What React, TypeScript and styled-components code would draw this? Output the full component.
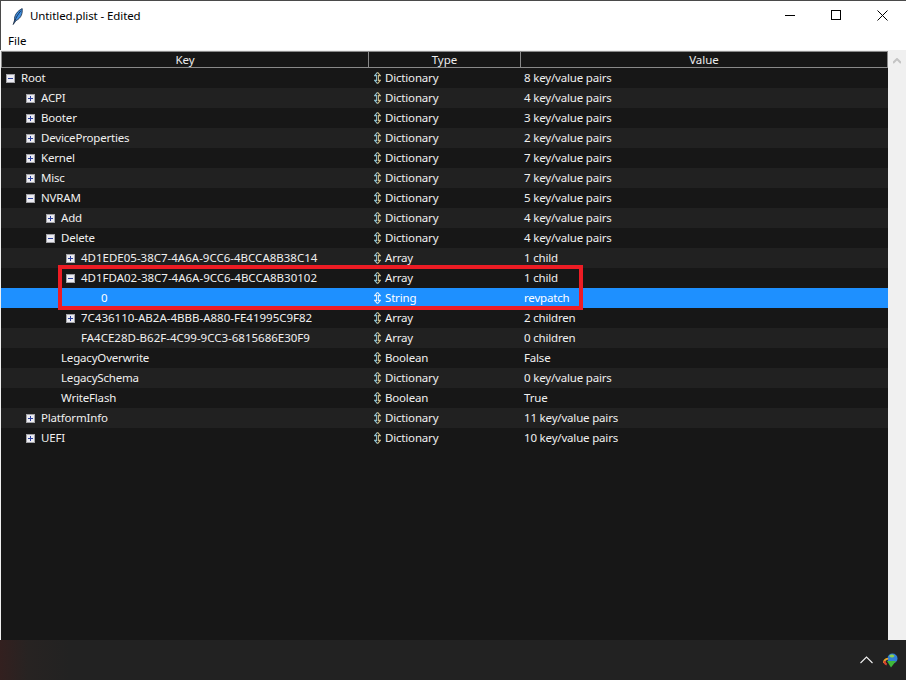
import React from "react";
import styled, { createGlobalStyle } from "styled-components";

const Global = createGlobalStyle`
  html, body { margin: 0; padding: 0; background: #222; }
  #root { width: 906px; height: 680px; }
  * { box-sizing: border-box; }
`;

const Screen = styled.div`
  position: relative;
  width: 906px;
  height: 680px;
  display: flex;
  flex-direction: column;
  overflow: hidden;
  font-family: "Noto Sans", "Open Sans", sans-serif;
  font-size: 11.5px;
`;

const TitleBar = styled.div`
  height: 31px;
  flex: none;
  background: #fff;
  border-top: 1px solid #4a4a4a;
  border-left: 1px solid #4a4a4a;
  padding-right: 1px;
  display: flex;
  align-items: center;
  color: #000;
`;

const Feather = styled.svg`
  width: 11px;
  height: 17px;
  margin-left: 11px;
  flex: none;
`;

const TitleText = styled.span`
  margin: 0 0 2px 7px;
  flex: 1;
  letter-spacing: -0.1px;
`;

const WinButton = styled.div`
  width: 46px;
  height: 28px;
  align-self: flex-start;
  display: flex;
  align-items: center;
  justify-content: center;
`;

const MenuBar = styled.div`
  height: 19px;
  flex: none;
  background: #fff;
  border-left: 1px solid #4a4a4a;
  display: flex;
  align-items: center;
  padding-left: 7px;
  color: #000;
`;

const Body = styled.div`
  height: 590px;
  flex: none;
  display: flex;
  background: #f0f0f0;
  padding-top: 1px;
`;

const Tree = styled.div`
  width: 887px;
  flex: none;
  background: #171717;
  margin-left: 1px;
  display: flex;
  flex-direction: column;
  color: #f0f0f0;
`;

const HeaderRow = styled.div`
  height: 17px;
  flex: none;
  display: grid;
  grid-template-columns: 367px 152px 1fr;
  border: 1px solid #8a8a8a;
  background: #171717;
`;

const HeaderCell = styled.div`
  border-right: 1px solid #8a8a8a;
  display: flex;
  align-items: center;
  justify-content: center;
  line-height: 15px;
  color: #ececec;
  &:last-child { border-right: none; }
`;

const Row = styled.div<{ $alt: boolean; $sel: boolean }>`
  height: 20px;
  flex: none;
  display: grid;
  grid-template-columns: 368px 151px 1fr;
  align-items: center;
  background: ${(p) => (p.$sel ? "#1e90ff" : p.$alt ? "#212121" : "#171717")};
  color: ${(p) => (p.$sel ? "#fff" : "#f0f0f0")};
`;

const KeyCell = styled.div<{ $depth: number }>`
  display: flex;
  align-items: center;
  padding-left: ${(p) => 5 + p.$depth * 20}px;
  white-space: nowrap;
`;

const Label = styled.span<{ $guid?: boolean }>`
  margin-bottom: 2px;
  letter-spacing: ${(p) => (p.$guid ? "0" : "-0.18px")};
`;

const Expander = styled.svg`
  width: 9px;
  height: 9px;
  flex: none;
  margin-right: 6px;
`;

const ExpanderGap = styled.span`
  width: 15px;
  flex: none;
`;

const TypeCell = styled.div`
  display: flex;
  align-items: center;
  padding-left: 5px;
`;

const Updown = styled.svg`
  width: 7px;
  height: 12px;
  flex: none;
  margin: 0 4px 1px 0;
`;

const ValueCell = styled.div`
  padding: 0 0 2px 4px;
  white-space: nowrap;
  letter-spacing: -0.18px;
`;

const Highlight = styled.div`
  position: absolute;
  left: 58px;
  top: 265px;
  width: 525px;
  height: 45px;
  border: 4px solid #ed1c24;
  pointer-events: none;
`;

const Scrollbar = styled.div`
  flex: 1;
  display: flex;
  justify-content: center;
  padding-top: 7px;
`;

const Taskbar = styled.div`
  flex: 1;
  background: linear-gradient(90deg, #33201f 0, #272322 28px, #222222 70px);
  display: flex;
  align-items: center;
  justify-content: flex-end;
  padding-right: 8px;
  gap: 9px;
`;

const Icon = styled.svg`
  flex: none;
`;

type R = { d: number; e?: "+" | "-"; k: string; t: string; v: string };

const rows: R[] = [
  { d: 0, e: "-", k: "Root", t: "Dictionary", v: "8 key/value pairs" },
  { d: 1, e: "+", k: "ACPI", t: "Dictionary", v: "4 key/value pairs" },
  { d: 1, e: "+", k: "Booter", t: "Dictionary", v: "3 key/value pairs" },
  { d: 1, e: "+", k: "DeviceProperties", t: "Dictionary", v: "2 key/value pairs" },
  { d: 1, e: "+", k: "Kernel", t: "Dictionary", v: "7 key/value pairs" },
  { d: 1, e: "+", k: "Misc", t: "Dictionary", v: "7 key/value pairs" },
  { d: 1, e: "-", k: "NVRAM", t: "Dictionary", v: "5 key/value pairs" },
  { d: 2, e: "+", k: "Add", t: "Dictionary", v: "4 key/value pairs" },
  { d: 2, e: "-", k: "Delete", t: "Dictionary", v: "4 key/value pairs" },
  { d: 3, e: "+", k: "4D1EDE05-38C7-4A6A-9CC6-4BCCA8B38C14", t: "Array", v: "1 child" },
  { d: 3, e: "-", k: "4D1FDA02-38C7-4A6A-9CC6-4BCCA8B30102", t: "Array", v: "1 child" },
  { d: 4, k: "0", t: "String", v: "revpatch" },
  { d: 3, e: "+", k: "7C436110-AB2A-4BBB-A880-FE41995C9F82", t: "Array", v: "2 children" },
  { d: 3, k: "FA4CE28D-B62F-4C99-9CC3-6815686E30F9", t: "Array", v: "0 children" },
  { d: 2, k: "LegacyOverwrite", t: "Boolean", v: "False" },
  { d: 2, k: "LegacySchema", t: "Dictionary", v: "0 key/value pairs" },
  { d: 2, k: "WriteFlash", t: "Boolean", v: "True" },
  { d: 1, e: "+", k: "PlatformInfo", t: "Dictionary", v: "11 key/value pairs" },
  { d: 1, e: "+", k: "UEFI", t: "Dictionary", v: "10 key/value pairs" },
];

const ExpanderIcon = ({ open }: { open: boolean }) => (
  <Expander viewBox="0 0 9 9" shapeRendering="crispEdges">
    <rect x="0" y="0" width="9" height="9" fill="#a4a4a8" />
    <rect x="1" y="1" width="7" height="7" fill="#ececf2" />
    <rect x="2" y="4" width="5" height="1" fill="#2a3f9f" />
    {!open && <rect x="4" y="2" width="1" height="5" fill="#2a3f9f" />}
  </Expander>
);

const UpdownIcon = ({ sel }: { sel: boolean }) => (
  <Updown viewBox="0 0 7 12" fill="none">
    <path d="M3.5 .3 L.6 3.6 H2.6 V8.4 H.6 L3.5 11.7" stroke={sel ? "#e0f0ff" : "#8fc0d0"} strokeWidth="1.1" />
    <path d="M3.5 .3 L6.4 3.6 H4.4 V8.4 H6.4 L3.5 11.7" stroke={sel ? "#e0f0ff" : "#d0bc84"} strokeWidth="1.1" />
  </Updown>
);

export default function App() {
  return (
    <Screen>
      <Global />
      <TitleBar>
        <Feather viewBox="0 0 11 17">
          <path d="M1.2 16.5 L2.6 12 C2 8 5 3 10.2 .6 C10.6 5 9.6 10 4 12.6 Z" fill="#3f8fe0" stroke="#16263c" strokeWidth=".8" />
          <path d="M2.6 13.5 C4 9.5 6 6 9 2.6" stroke="#10203a" strokeWidth=".8" fill="none" />
        </Feather>
        <TitleText>Untitled.plist - Edited</TitleText>
        <WinButton>
          <svg width="10" height="10" viewBox="0 0 10 10" shapeRendering="crispEdges">
            <rect x="0" y="5" width="10" height="1" fill="#000" />
          </svg>
        </WinButton>
        <WinButton>
          <svg width="10" height="10" viewBox="0 0 10 10" shapeRendering="crispEdges">
            <rect x=".5" y=".5" width="9" height="9" fill="none" stroke="#000" />
          </svg>
        </WinButton>
        <WinButton>
          <svg width="11" height="11" viewBox="0 0 11 11">
            <path d="M.5 .5 L10.5 10.5 M10.5 .5 L.5 10.5" stroke="#000" strokeWidth="1" />
          </svg>
        </WinButton>
      </TitleBar>
      <MenuBar>File</MenuBar>
      <Body>
        <Tree>
          <HeaderRow>
            <HeaderCell>Key</HeaderCell>
            <HeaderCell>Type</HeaderCell>
            <HeaderCell>Value</HeaderCell>
          </HeaderRow>
          {rows.map((r, i) => (
            <Row key={i} $alt={i % 2 === 1} $sel={r.k === "0"}>
              <KeyCell $depth={r.d}>
                {r.e ? <ExpanderIcon open={r.e === "-"} /> : <ExpanderGap />}
                <Label $guid={r.k.length > 30}>{r.k}</Label>
              </KeyCell>
              <TypeCell>
                <UpdownIcon sel={r.k === "0"} />
                <Label>{r.t}</Label>
              </TypeCell>
              <ValueCell>{r.v}</ValueCell>
            </Row>
          ))}
        </Tree>
        <Scrollbar>
          <svg width="8" height="6" viewBox="0 0 8 6">
            <path d="M0 5 L4 1 L8 5" stroke="#c4c4c4" strokeWidth="2" fill="none" />
          </svg>
        </Scrollbar>
      </Body>
      <Taskbar>
        <Icon width="13" height="8" viewBox="0 0 13 8">
          <path d="M.5 7 L6.5 1 L12.5 7" stroke="#f0f0f0" strokeWidth="1.1" fill="none" />
        </Icon>
        <Icon width="16" height="15" viewBox="0 0 16 15">
          <circle cx="10.5" cy="5.5" r="5" fill="#2f7fd8" />
          <path d="M7 3 C8.5 1 11.5 1 12.5 3 C11 5 9 5 7 3 Z" fill="#8fd04a" />
          <path d="M1 10 C1 6 4 4.5 6.5 5 L5.5 7 C3.5 7 3 8.5 3.5 10 Z" fill="#e2a52c" />
          <path d="M1.5 8 C1 10 2.5 12 4.5 12.5 L5 10.5 C4 10 3.5 9 3.5 8 Z" fill="#d9432f" />
          <path d="M5 8 L14 8 L9 14.5 Z" fill="#3fb83a" />
        </Icon>
      </Taskbar>
      <Highlight />
    </Screen>
  );
}
